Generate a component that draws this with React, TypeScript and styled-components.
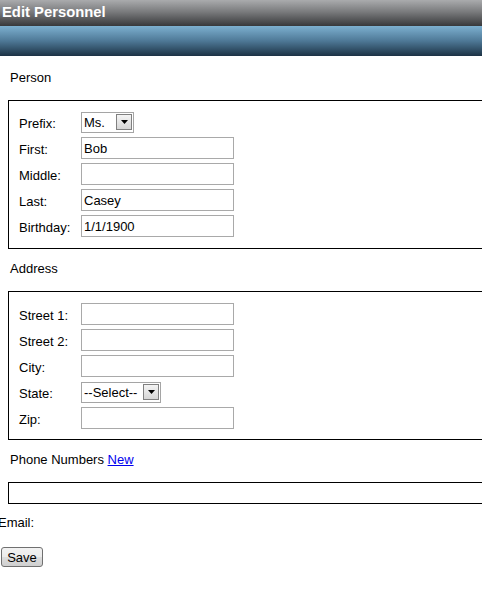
import React from "react";
import styled, { createGlobalStyle } from "styled-components";

const Global = createGlobalStyle`
  html, body { margin: 0; padding: 0; background: #fff; }
  body {
    font-family: "Liberation Sans", Arial, sans-serif;
    font-size: 13px;
    color: #000;
    overflow: hidden;
  }
`;

const Page = styled.div`
  width: 482px;
  overflow: hidden;
`;

const TitleBar = styled.div`
  height: 26px;
  box-sizing: border-box;
  background: linear-gradient(to bottom, #aaabad 0%, #7a7b7d 45%, #38393b 100%);
  color: #fff;
  font-weight: bold;
  font-size: 14.8px;
  line-height: 25px;
  padding-left: 2px;
`;

const BlueBar = styled.div`
  height: 30px;
  background: linear-gradient(to bottom, #7db0d0 0%, #4e7896 50%, #1c3244 100%);
`;

const Content = styled.div`
  padding: 0 0 0 8px;
`;

const SectionLabel = styled.div<{ $top: number }>`
  padding: ${p => p.$top + 1}px 0 0 2px;
  height: 17px;
  line-height: 18px;
`;

const Box = styled.div<{ $pad: string; $empty?: boolean }>`
  width: 520px;
  box-sizing: border-box;
  border: 1px solid #000;
  margin-top: 14px;
  padding: ${p => p.$pad};
  display: ${p => (p.$empty ? "block" : "grid")};
  grid-template-columns: 62px 153px;
  row-gap: 4px;
  align-items: center;
`;

const Label = styled.label`
  height: 22px;
  box-sizing: border-box;
  padding-top: 2px;
  line-height: 21px;
`;

const TextInput = styled.input`
  width: 153px;
  height: 22px;
  box-sizing: border-box;
  border: 1px solid #a9a9a9;
  padding: 0 2px;
  font-family: "Liberation Sans", Arial, sans-serif;
  font-size: 13px;
  color: #000;
  margin: 0;
  outline: none;
`;

const FakeSelect = styled.div<{ $w: number }>`
  width: ${p => p.$w}px;
  height: 21px;
  box-sizing: border-box;
  border: 1px solid #a5a5a5;
  display: flex;
  align-items: center;
  justify-content: space-between;
  padding: 0 1px 0 2px;
  background: #fff;
`;

const SelectText = styled.span`
  font-size: 13px;
  padding-top: 1px;
`;

const ArrowBtn = styled.span`
  width: 16px;
  height: 16px;
  box-sizing: border-box;
  border: 1px solid #808080;
  background: linear-gradient(to bottom, #f4f4f4, #d6d6d6);
  display: flex;
  align-items: center;
  justify-content: center;
`;

const Link = styled.a`
  color: #0000ee;
  text-decoration: underline;
`;

const EmailLabel = styled.div`
  margin: 10px 0 0 -10px;
  height: 17px;
  line-height: 18px;
`;

const SaveButton = styled.button`
  margin: 16px 0 0 -7px;
  width: 42px;
  height: 20px;
  padding: 0;
  font-family: "Liberation Sans", Arial, sans-serif;
  font-size: 13px;
  color: #000;
  border: 1px solid #707070;
  border-radius: 3px;
  background: linear-gradient(to bottom, #f2f2f2 0%, #ebebeb 50%, #dddddd 51%, #cfcfcf 100%);
`;

const Arrow = () => (
  <svg width="7" height="4" viewBox="0 0 7 4">
    <path d="M0 0 H7 L3.5 4 Z" fill="#000" />
  </svg>
);

const Select = ({ value, width }: { value: string; width: number }) => (
  <FakeSelect $w={width}>
    <SelectText>{value}</SelectText>
    <ArrowBtn>
      <Arrow />
    </ArrowBtn>
  </FakeSelect>
);

export default function App() {
  return (
    <Page>
      <Global />
      <TitleBar>Edit Personnel</TitleBar>
      <BlueBar />
      <Content>
        <SectionLabel $top={12}>Person</SectionLabel>
        <Box $pad="10px 10px 11px">
          <Label>Prefix:</Label>
          <Select value="Ms." width={53} />
          <Label>First:</Label>
          <TextInput defaultValue="Bob" />
          <Label>Middle:</Label>
          <TextInput defaultValue="" />
          <Label>Last:</Label>
          <TextInput defaultValue="Casey" />
          <Label>Birthday:</Label>
          <TextInput defaultValue="1/1/1900" />
        </Box>
        <SectionLabel $top={10}>Address</SectionLabel>
        <Box $pad="11px 10px 10px">
          <Label>Street 1:</Label>
          <TextInput defaultValue="" />
          <Label>Street 2:</Label>
          <TextInput defaultValue="" />
          <Label>City:</Label>
          <TextInput defaultValue="" />
          <Label>State:</Label>
          <Select value="--Select--" width={80} />
          <Label>Zip:</Label>
          <TextInput defaultValue="" />
        </Box>
        <SectionLabel $top={10}>
          Phone Numbers <Link href="#">New</Link>
        </SectionLabel>
        <Box $pad="10px" $empty />
        <EmailLabel>Email:</EmailLabel>
        <SaveButton>Save</SaveButton>
      </Content>
    </Page>
  );
}
